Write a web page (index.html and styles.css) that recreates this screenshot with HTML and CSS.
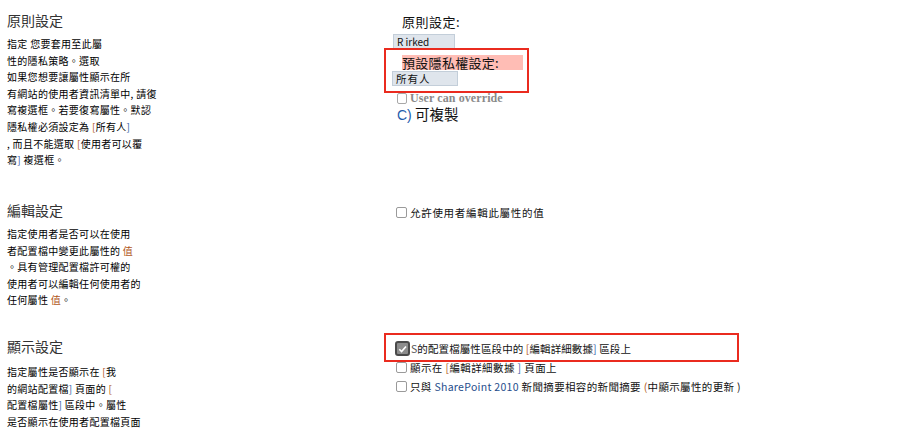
FILE: index.html
```html
<!DOCTYPE html>
<html lang="zh-Hant">
<head>
<meta charset="utf-8">
<title>原則設定</title>
<link rel="stylesheet" href="styles.css">
</head>
<body>
<div class="page">
  <section class="sec sec1">
    <div class="left">
      <h2 class="head">原則設定</h2>
      <p class="desc">指定 您要套用至此屬<br>性的隱私策略。選取<br>如果您想要讓屬性顯示在所<br>有網站的使用者資訊清單中, 請復<br>寫複選框。若要復寫屬性。默認<br>隱私權必須設定為 <span class="br">[</span>所有人<span class="br2">]</span><br>, 而且不能選取 <span class="br">[</span>使用者可以覆<br>寫<span class="br2">]</span> 複選框。</p>
    </div>
    <div class="right">
      <div class="lbl lbl1">原則設定:</div>
      <div class="field f1">R irked</div>
      <div class="redbox rb1">
        <div class="pink">預設隱私權設定:</div>
        <div class="field f2">所有人</div>
      </div>
      <div class="override"><span class="cb cb-grey"></span><span>User can override</span></div>
      <div class="copy"><span class="blue">C)</span> 可複製</div>
    </div>
  </section>

  <section class="sec sec2">
    <div class="left">
      <h2 class="head">編輯設定</h2>
      <p class="desc">指定使用者是否可以在使用<br>者配置檔中變更此屬性的 <span class="br">值</span><br>。具有管理配置檔許可權的<br>使用者可以編輯任何使用者的<br>任何屬性 <span class="br">值</span>。</p>
    </div>
    <div class="right">
      <div class="row r-edit"><span class="cb"></span><span>允許使用者編輯此屬性的值</span></div>
    </div>
  </section>

  <section class="sec sec3">
    <div class="left">
      <h2 class="head">顯示設定</h2>
      <p class="desc desc3">指定屬性是否顯示在 <span class="br">[</span>我<br>的網站配置檔<span class="br2">]</span> 頁面的 <span class="br">[</span><br>配置檔屬性<span class="br2">]</span> 區段中。屬性<br>是否顯示在使用者配置檔頁面</p>
    </div>
    <div class="right">
      <div class="redbox rb2">
        <div class="row r1"><span class="cb cb-checked"><svg viewBox="0 0 12 12" width="12" height="12"><path d="M2.5 6.3 L5 8.8 L9.8 3.2" fill="none" stroke="#fff" stroke-width="1.8"/></svg></span><span><span class="s">S</span>的配置檔屬性區段中的 <span class="br">[</span>編輯詳細數據<span class="br2">]</span> 區段上</span></div>
      </div>
      <div class="row r2"><span class="cb"></span><span>顯示在 <span class="br">[</span>編輯詳細數據 <span class="br2">]</span> 頁面上</span></div>
      <div class="row r3"><span class="cb"></span><span>只與 <span class="sp">SharePoint 2010</span> 新聞摘要相容的新聞摘要 <span class="br">(</span>中顯示屬性的更新 )</span></div>
    </div>
  </section>
</div>
</body>
</html>
```

FILE: styles.css
```css
html, body {
  margin: 0;
  padding: 0;
  background: #fff;
}
body {
  width: 904px;
  height: 434px;
  overflow: hidden;
  font-family: "Noto Sans CJK TC", "Noto Sans", sans-serif;
  color: #111;
}
.page {
  display: flex;
  flex-direction: column;
}
.sec {
  display: grid;
  grid-template-columns: 384px 1fr;
}
.sec1 { height: 190px; }
.sec2 { height: 136px; }
.sec3 { height: 108px; }

.left {
  padding-left: 7px;
}
.head {
  margin: 10px 0 0;
  font-size: 14px;
  line-height: 20px;
  font-weight: normal;
  color: #333;
}
.desc {
  margin: 6px 0 0;
  font-size: 10px;
  line-height: 16.6px;
  color: #000;
  letter-spacing: 0.3px;
}
.desc3 { margin-top: 8px; }
.br { color: #b0561a; }
.br2 { color: #3a5fa8; }

.right {
  display: flex;
  flex-direction: column;
  align-items: flex-start;
  font-size: 10.5px;
  letter-spacing: 0.7px;
}
.lbl1 {
  margin: 14px 0 0 18px;
  font-size: 13px;
  line-height: 16px;
  color: #111;
  letter-spacing: 0.5px;
}
.field {
  box-sizing: border-box;
  background: #dfe5ec;
  border: 1px solid #c3ced9;
  font-size: 10px;
  line-height: 14px;
  padding: 0 0 0 3px;
  color: #111;
  letter-spacing: 0;
}
.f1 {
  margin: 4px 0 0 9px;
  width: 62px;
  height: 16px;
}
.redbox {
  box-sizing: border-box;
  border: 2px solid #ea2b1f;
}
.rb1 {
  margin-top: -2px;
  width: 145px;
  height: 45px;
  display: flex;
  flex-direction: column;
  align-items: flex-start;
}
.pink {
  margin: 5px 0 0 16px;
  width: 121px;
  height: 15px;
  background: #ffbdb5;
  font-size: 13px;
  line-height: 15px;
  color: #111;
  letter-spacing: 0.3px;
}
.f2 {
  margin: 1px 0 0 6px;
  width: 66px;
  height: 15px;
  line-height: 13px;
  font-size: 10.5px;
  letter-spacing: 1px;
}
.override {
  display: flex;
  align-items: center;
  margin: -1px 0 0 13px;
  height: 13px;
  font-family: "Liberation Serif", serif;
  font-weight: bold;
  font-size: 12px;
  color: #8a8a8a;
  letter-spacing: 0.1px;
}
.override .cb { margin-right: 3px; }
.copy {
  margin: 0 0 0 13px;
  font-size: 14.5px;
  line-height: 18px;
  color: #111;
  letter-spacing: 0;
}
.blue {
  color: #1f5cab;
  font-family: "Liberation Sans", sans-serif;
  font-size: 14px;
}

.cb {
  box-sizing: border-box;
  display: inline-block;
  flex: none;
  width: 11px;
  height: 11px;
  border: 1px solid #9a9a9a;
  border-radius: 2px;
  background: #fff;
}
.cb-grey { border-color: #a8a8a8; width: 10px; height: 11px; }
.row {
  display: flex;
  align-items: center;
  gap: 3px;
  height: 19px;
  color: #111;
  white-space: nowrap;
}
.r-edit {
  margin: 13px 0 0 12px;
}
.rb2 {
  margin-top: 7px;
  width: 355px;
  height: 29px;
  padding: 4px 0 0 9px;
}
.r1 { letter-spacing: 0.1px; }
.cb-checked {
  width: 15px;
  height: 15px;
  border: 2px solid #4a4a4a;
  border-radius: 3px;
  background: #8c8c8c;
  display: flex;
  align-items: center;
  justify-content: center;
  margin-right: -2px;
}
.s { color: #555; }
.r2 { margin: -4px 0 0 12px; letter-spacing: 0.4px; }
.r3 { margin: 0 0 0 12px; letter-spacing: 0.35px; }
.sp { color: #1f4e8c; letter-spacing: 0.3px; }
```
